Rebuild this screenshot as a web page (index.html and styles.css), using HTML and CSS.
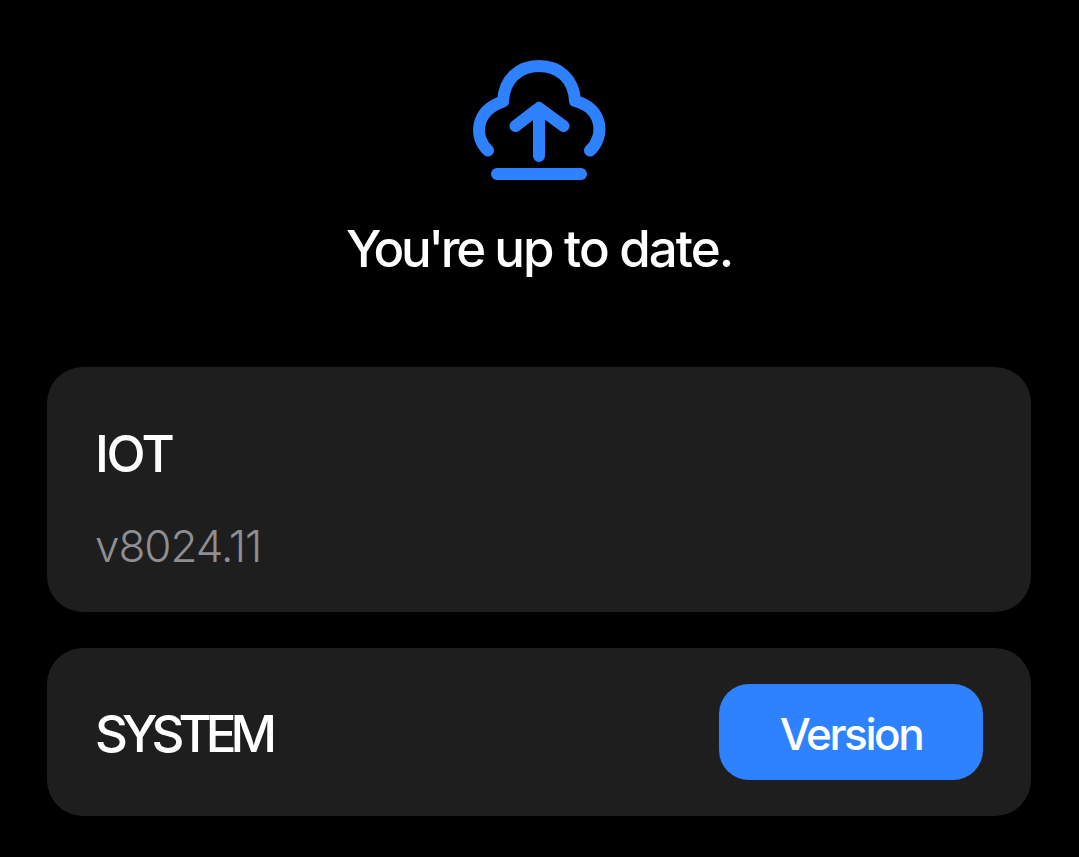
FILE: index.html
```
<!doctype html>
<html lang="en">
<head>
	<meta charset="utf-8">
	<title>Update</title>
	<link rel="stylesheet" href="styles.css">
</head>
<body>

<div class="status">
	<svg class="cloud" viewBox="0 0 134 122">
		<path d="M16 91.500C2 79 2.500 52 31 42.500C32 20 47 7 67 7S102 20 103 42C131.500 49 133 78 118 91.500"/>
		<path d="M67 97V49M43.500 67L67 49L91.500 67"/>
		<path d="M25 115H109"/>
	</svg>
	<h1 class="title"><span class="first">You're</span> up to date.</h1>
</div>

<div class="card iot">
	<h2><span class="iot-name">IOT</span></h2>
	<p><span class="num">v8024.11</span></p>
</div>

<div class="card system">
	<h2><span class="sys-name">SYSTEM</span></h2>
	<button type="button" class="btn">Version</button>
</div>

</body>
</html>
```
FILE: styles.css
```
*{ padding: 0; margin: 0; box-sizing: border-box}
body{ background: #000; color: #fff; font-family: Inter, "Liberation Sans", sans-serif; padding: 59px 48px 0 47px}
h1,h2{ font-size: 51px; line-height: 60px; font-weight: 500}

.status{ text-align: center; height: 308px}
.cloud{ display: block; width: 134px; height: 122px; margin: 0 auto 38px; fill: none; stroke: #2f82ff; stroke-width: 12; stroke-linecap: round; stroke-linejoin: round}
.title{ letter-spacing: -2px}
.first{ letter-spacing: -3.4px}

.card{ background: #1e1e1e; border-radius: 36px; padding: 0 48px}
.iot{ height: 245px; padding-top: 57px; margin-bottom: 36px}
.iot p{ color: #8e8e93; font-size: 44px; line-height: 52px; margin-top: 36px; font-weight: 300}
.iot-name{ letter-spacing: -2.5px}
.num{ letter-spacing: -1px}

.system{ height: 168px; display: flex; align-items: center; justify-content: space-between}
.system h2{ padding-top: 4px}
.sys-name{ letter-spacing: -6px}
.btn{ width: 264px; height: 96px; padding-top: 3px; border: 0; border-radius: 30px; background: #2f82ff; color: #fff; font-family: inherit; font-size: 44px; font-weight: 500; letter-spacing: -2.4px}
```
